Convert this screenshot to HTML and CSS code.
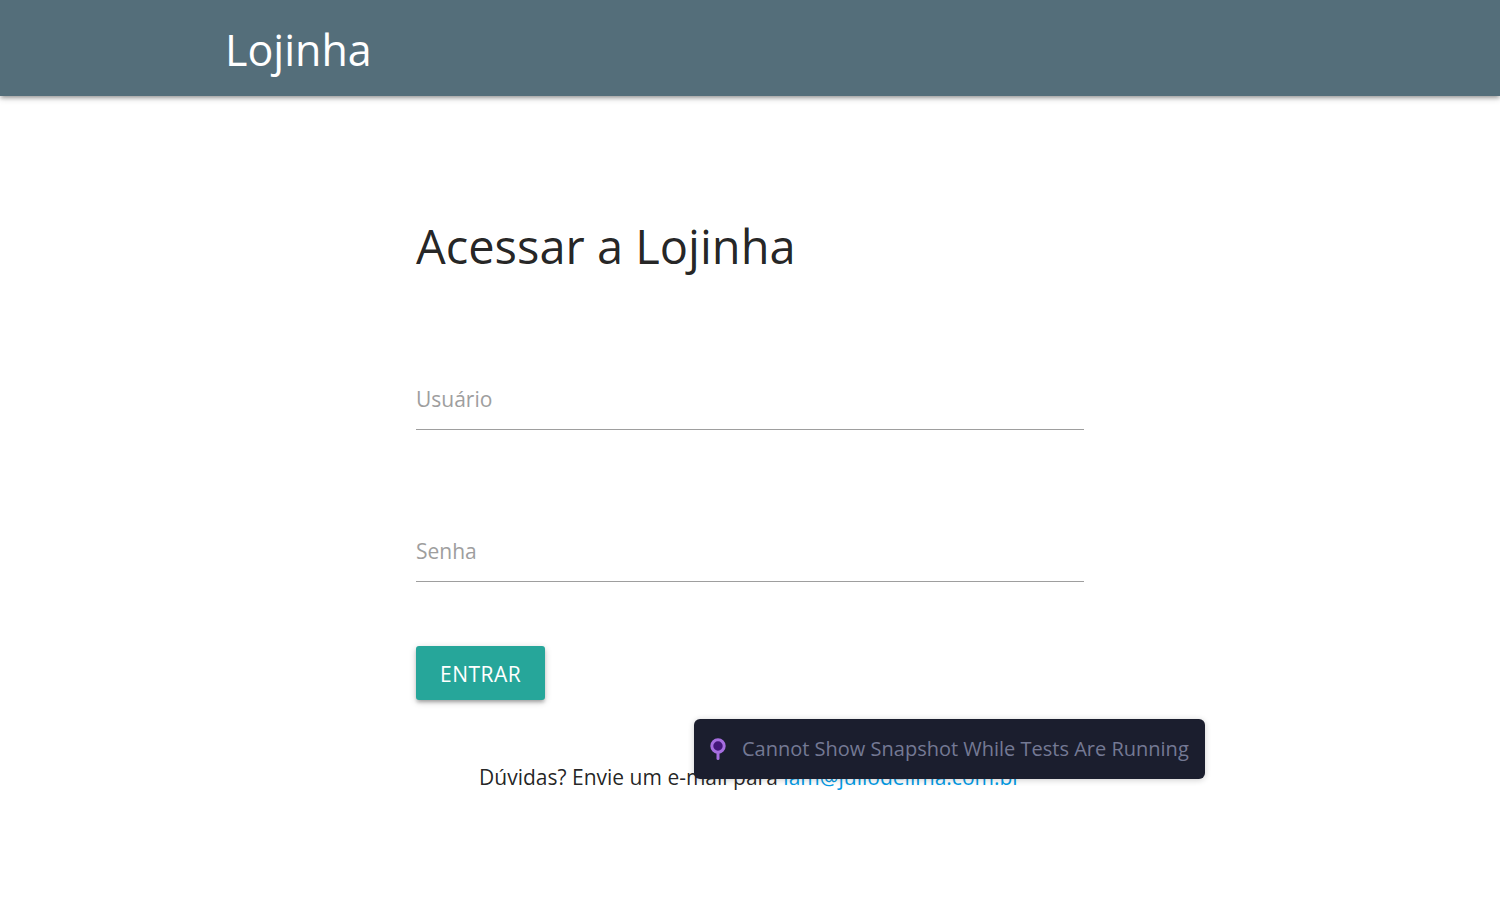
FILE: index.html
```html
<!DOCTYPE html>
<html lang="pt-BR">
<head>
<meta charset="utf-8">
<title>Lojinha</title>
<link rel="stylesheet" href="styles.css">
</head>
<body>
<header class="navbar">
  <div class="container"><a class="brand" href="#">Lojinha</a></div>
</header>
<main class="login">
  <h1 class="title">Acessar a Lojinha</h1>
  <form class="form">
    <div class="field">
      <label class="field-label" for="usuario">Usuário</label>
      <input class="field-input" id="usuario" type="text">
    </div>
    <div class="field">
      <label class="field-label" for="senha">Senha</label>
      <input class="field-input" id="senha" type="password">
    </div>
    <button class="submit" type="submit">Entrar</button>
  </form>
  <div class="contact">
    <p class="contact-text">Dúvidas? Envie um e-mail para <a class="contact-link" href="mailto:iam@juliodelima.com.br">iam@juliodelima.com.br</a></p>
    <div class="toast" role="status">
      <svg class="pin" viewBox="0 0 16 22" aria-hidden="true">
        <path d="M8 14v6.500" stroke="#a66ee0" stroke-width="3" stroke-linecap="round"/>
        <circle cx="8" cy="8" r="6.200" fill="#43177a" stroke="#a66ee0" stroke-width="3"/>
      </svg>
      <span>Cannot Show Snapshot While Tests Are Running</span>
    </div>
  </div>
</main>
</body>
</html>
```
FILE: styles.css
```css
* { box-sizing: border-box; }
body {
  margin: 0;
  background: #fff;
  color: rgba(0, 0, 0, 0.87);
  font-family: "Segoe UI", "Open Sans", "Noto Sans", sans-serif;
  font-size: 21px;
  line-height: 32px;
}
.navbar {
  background: #546e7a;
  box-shadow: 0 3px 3px rgba(0, 0, 0, 0.14), 0 4px 2px -3px rgba(0, 0, 0, 0.12), 0 2px 7px rgba(0, 0, 0, 0.2);
}
.container { width: 70%; margin: 0 auto; }
.brand {
  display: inline-block;
  padding-top: 4px;
  color: #fff;
  font-size: 43px;
  line-height: 92px;
  text-decoration: none;
  vertical-align: top;
}
.login { width: 668px; max-width: 90%; margin: 0 auto; padding-top: 120px; }
.title { margin: 0; font-size: 47px; font-weight: 400; line-height: 60px; }
.form { padding-top: 86px; }
.field { display: grid; margin-bottom: 84px; }
.field-label, .field-input { grid-area: 1 / 1; }
.field-label { padding-top: 21px; color: #9e9e9e; }
.field-input {
  width: 100%;
  height: 68px;
  padding: 0;
  border: 0;
  border-bottom: 1px solid #9e9e9e;
  background: transparent;
  font: inherit;
  outline: none;
}
.submit {
  display: block;
  height: 54px;
  margin-top: -20px;
  padding: 2px 24px 0;
  border: 0;
  border-radius: 3px;
  background: #26a69a;
  box-shadow: 0 3px 3px rgba(0, 0, 0, 0.14), 0 4px 2px -3px rgba(0, 0, 0, 0.12), 0 2px 7px rgba(0, 0, 0, 0.2);
  color: #fff;
  font: inherit;
  letter-spacing: 0.5px;
  text-transform: uppercase;
}
.contact { position: relative; margin-top: 61px; }
.contact-text { margin: 0; text-align: center; }
.contact-link { color: #039be5; text-decoration: none; }
.toast {
  position: absolute;
  bottom: 14px;
  left: 278px;
  display: flex;
  align-items: center;
  gap: 16px;
  height: 60px;
  padding: 0 16px;
  border-radius: 6px;
  background: #1b1e2e;
  box-shadow: 0 1px 6px rgba(0, 0, 0, 0.2);
  color: #747994;
  font-size: 20px;
  white-space: nowrap;
}
.pin { width: 16px; height: 22px; fill: none; }
```
